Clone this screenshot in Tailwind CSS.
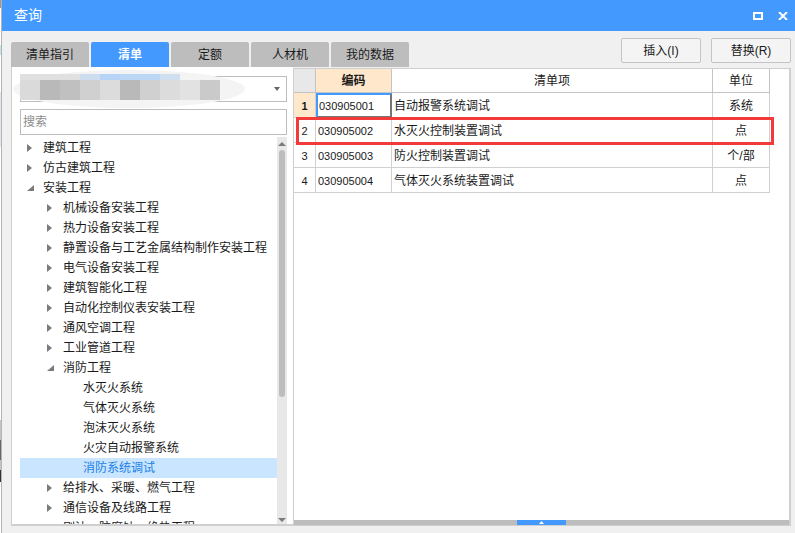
<!DOCTYPE html>
<html>
<head>
<meta charset="utf-8">
<script src="https://cdn.jsdelivr.net/npm/@tailwindcss/browser@4"></script>
</head>
<body class="bg-white overflow-hidden">
<div class="h-[533px] w-[795px] flex text-[12px] text-[#1a1a1a] font-['Liberation_Sans','Noto_Sans_CJK_SC',sans-serif]">
  <!-- sliver of the window behind the dialog -->
  <div class="w-[1px] flex flex-col bg-white">
    <div class="h-[8px] bg-[#999]"></div>
    <div class="h-[37px]"></div>
    <div class="h-[10px] bg-[#bfe6ea]"></div>
    <div class="h-[37px]"></div>
    <div class="h-[55px] bg-[#dfe6f2]"></div>
    <div class="h-[273px]"></div>
    <div class="h-[20px] bg-[#c4c4c4]"></div>
    <div class="h-[20px] bg-[#666]"></div>
    <div class="h-[10px] bg-[#c4c4c4]"></div>
    <div class="h-[12px] bg-[#333]"></div>
  </div>
  <div class="w-[1px] bg-[#b4b4b4]"></div>
  <div class="flex-1 flex flex-col bg-[#f0f0f0] relative">
    <!-- title bar -->
    <div class="h-[31px] bg-[#4499ff] flex items-center pl-[12px] pr-[6px] text-white">
      <span class="text-[14px] flex-1">查询</span>
      <span class="w-[10px] h-[8px] border-2 border-white mr-[15px]"></span>
      <svg class="w-[10px] h-[8px] mr-[1px]" viewBox="0 0 10 8"><path d="M1 0 9 8M9 0 1 8" stroke="#fff" stroke-width="2" fill="none"/></svg>
    </div>

    <div class="flex pl-[9px] pr-[4px]">
      <!-- tabs and tree -->
      <div class="w-[280px] pt-[11px]">
        <div class="flex gap-[2px] w-[400px] h-[25px] text-center leading-[27px]">
          <div class="w-[78px] bg-[#bdbdbd] rounded-t-[2px]">清单指引</div>
          <div class="w-[78px] bg-[#4499ff] rounded-t-[2px] text-white font-bold">清单</div>
          <div class="w-[78px] bg-[#bdbdbd] rounded-t-[2px]">定额</div>
          <div class="w-[78px] bg-[#bdbdbd] rounded-t-[2px]">人材机</div>
          <div class="w-[78px] bg-[#bdbdbd] rounded-t-[2px]">我的数据</div>
        </div>
        <div class="h-[459px] w-[282px] bg-white border border-t-0 border-r-0 border-[#cfcfcf] border-b-2 pl-[8px] pt-[9px] flex flex-col overflow-hidden relative">
          <!-- combo -->
          <div class="h-[26px] w-[267px] shrink-0 border border-[#bdbdbd] flex items-center justify-end pr-[6px]">
            <svg class="w-[6px] h-[4px]" viewBox="0 0 6 4"><path d="M0 0h6L3 4z" fill="#666"/></svg>
          </div>
          <!-- mosaic over the combo -->
          <div class="absolute left-[1px] top-[3px] w-[232px] h-[38px] bg-[#f4f4f4] rounded-[50%]"></div>
          <div class="absolute left-[8px] top-[7px] flex flex-col">
            <div class="flex h-[6px]">
              <div class="w-[60px] bg-[#e0e0e0]"></div><div class="w-[20px] bg-[#cddcee]"></div><div class="w-[20px] bg-[#b7d3f6]"></div><div class="w-[20px] bg-[#bcd6f6]"></div><div class="w-[20px] bg-[#bcd6f6]"></div><div class="w-[20px] bg-[#d0dff0]"></div>
            </div>
            <div class="flex h-[20px]">
              <div class="w-[20px] bg-[#dadada]"></div><div class="w-[20px] bg-[#b9b9b9]"></div><div class="w-[20px] bg-[#c0c0c0]"></div><div class="w-[20px] bg-[#d0d0d0]"></div><div class="w-[20px] bg-[#dcdcdc]"></div><div class="w-[20px] bg-[#b9b9b9]"></div><div class="w-[20px] bg-[#d0d0d0]"></div><div class="w-[20px] bg-[#dcdcdc]"></div><div class="w-[20px] bg-[#e2e2e2]"></div><div class="w-[20px] bg-[#cacaca]"></div>
            </div>
          </div>
          <!-- search -->
          <div class="h-[26px] w-[267px] shrink-0 mt-[7px] border border-[#bdbdbd] flex items-center pl-[2px] text-[#8c8c8c] relative">搜索</div>
          <!-- tree -->
          <div class="flex flex-1 mt-[2px] w-[267px] min-h-0">
            <div class="flex-1 overflow-hidden pt-[1px] leading-[20px]">
              <div class="h-[20px] flex items-center pl-[7px]"><svg class="w-[5px] h-[8px] mr-[11px]" viewBox="0 0 5 8"><path d="M0 0l5 4-5 4z" fill="#7b7b7b"/></svg>建筑工程</div>
              <div class="h-[20px] flex items-center pl-[7px]"><svg class="w-[5px] h-[8px] mr-[11px]" viewBox="0 0 5 8"><path d="M0 0l5 4-5 4z" fill="#7b7b7b"/></svg>仿古建筑工程</div>
              <div class="h-[20px] flex items-center pl-[7px]"><svg class="w-[7px] h-[6px] mr-[9px]" viewBox="0 0 7 6"><path d="M7 0v6H0z" fill="#7b7b7b"/></svg>安装工程</div>
              <div class="h-[20px] flex items-center pl-[27px]"><svg class="w-[5px] h-[8px] mr-[11px]" viewBox="0 0 5 8"><path d="M0 0l5 4-5 4z" fill="#7b7b7b"/></svg>机械设备安装工程</div>
              <div class="h-[20px] flex items-center pl-[27px]"><svg class="w-[5px] h-[8px] mr-[11px]" viewBox="0 0 5 8"><path d="M0 0l5 4-5 4z" fill="#7b7b7b"/></svg>热力设备安装工程</div>
              <div class="h-[20px] flex items-center pl-[27px]"><svg class="w-[5px] h-[8px] mr-[11px]" viewBox="0 0 5 8"><path d="M0 0l5 4-5 4z" fill="#7b7b7b"/></svg>静置设备与工艺金属结构制作安装工程</div>
              <div class="h-[20px] flex items-center pl-[27px]"><svg class="w-[5px] h-[8px] mr-[11px]" viewBox="0 0 5 8"><path d="M0 0l5 4-5 4z" fill="#7b7b7b"/></svg>电气设备安装工程</div>
              <div class="h-[20px] flex items-center pl-[27px]"><svg class="w-[5px] h-[8px] mr-[11px]" viewBox="0 0 5 8"><path d="M0 0l5 4-5 4z" fill="#7b7b7b"/></svg>建筑智能化工程</div>
              <div class="h-[20px] flex items-center pl-[27px]"><svg class="w-[5px] h-[8px] mr-[11px]" viewBox="0 0 5 8"><path d="M0 0l5 4-5 4z" fill="#7b7b7b"/></svg>自动化控制仪表安装工程</div>
              <div class="h-[20px] flex items-center pl-[27px]"><svg class="w-[5px] h-[8px] mr-[11px]" viewBox="0 0 5 8"><path d="M0 0l5 4-5 4z" fill="#7b7b7b"/></svg>通风空调工程</div>
              <div class="h-[20px] flex items-center pl-[27px]"><svg class="w-[5px] h-[8px] mr-[11px]" viewBox="0 0 5 8"><path d="M0 0l5 4-5 4z" fill="#7b7b7b"/></svg>工业管道工程</div>
              <div class="h-[20px] flex items-center pl-[27px]"><svg class="w-[7px] h-[6px] mr-[9px]" viewBox="0 0 7 6"><path d="M7 0v6H0z" fill="#7b7b7b"/></svg>消防工程</div>
              <div class="h-[20px] pl-[63px]">水灭火系统</div>
              <div class="h-[20px] pl-[63px]">气体灭火系统</div>
              <div class="h-[20px] pl-[63px]">泡沫灭火系统</div>
              <div class="h-[20px] pl-[63px]">火灾自动报警系统</div>
              <div class="h-[20px] pl-[63px] bg-[#c9e5ff] text-[#1a7fe8]">消防系统调试</div>
              <div class="h-[20px] flex items-center pl-[27px]"><svg class="w-[5px] h-[8px] mr-[11px]" viewBox="0 0 5 8"><path d="M0 0l5 4-5 4z" fill="#7b7b7b"/></svg>给排水、采暖、燃气工程</div>
              <div class="h-[20px] flex items-center pl-[27px]"><svg class="w-[5px] h-[8px] mr-[11px]" viewBox="0 0 5 8"><path d="M0 0l5 4-5 4z" fill="#7b7b7b"/></svg>通信设备及线路工程</div>
              <div class="h-[20px] flex items-center pl-[27px]"><svg class="w-[5px] h-[8px] mr-[11px]" viewBox="0 0 5 8"><path d="M0 0l5 4-5 4z" fill="#7b7b7b"/></svg>刷油、防腐蚀、绝热工程</div>
            </div>
            <!-- scrollbar -->
            <div class="w-[10px] bg-[#e8e8e8] flex flex-col items-center">
              <svg class="w-[8px] h-[4px] mt-[5px] shrink-0" viewBox="0 0 8 4"><path d="M4 0l4 4H0z" fill="#7b7b7b"/></svg>
              <div class="w-[6px] h-[247px] mt-[4px] bg-[#bdbdbd] rounded-[3px]"></div>
              <svg class="w-[8px] h-[4px] mt-auto mb-[2px] shrink-0" viewBox="0 0 8 4"><path d="M0 0h8L4 4z" fill="#7b7b7b"/></svg>
            </div>
          </div>
        </div>
      </div>

      <!-- right side -->
      <div class="flex-1 ml-[2px] flex flex-col">
        <div class="h-[37px] flex justify-end items-start pt-[7px] gap-[10px]">
          <div class="w-[80px] h-[25px] bg-[#f4f4f4] border border-[#c4c4c4] rounded-[2px] flex items-center justify-center">插入(I)</div>
          <div class="w-[80px] h-[25px] bg-[#f4f4f4] border border-[#c4c4c4] rounded-[2px] flex items-center justify-center">替换(R)</div>
        </div>
        <div class="h-[458px] bg-white border border-[#cfcfcf] border-r-2 flex flex-col relative">
          <div class="flex-1">
            <div class="grid grid-cols-[22px_76px_321px_57px] w-[476px] grid-rows-[24px_25px_25px_25px_25px] leading-[26px]">
              <div class="bg-[#e8e8e8] border-r border-b border-[#c4c4c4]"></div>
              <div class="bg-[#ffe7cb] border-r border-b border-[#c4c4c4] text-center font-bold leading-[24px]">编码</div>
              <div class="border-r border-b border-[#c4c4c4] text-center leading-[24px]">清单项</div>
              <div class="border-r border-b border-[#c4c4c4] text-center leading-[24px]">单位</div>

              <div class="bg-[#ffe7cb] border-r border-b border-[#d0d0d0] text-center font-bold text-[11px]">1</div>
              <div class="border-2 border-[#777] border-t-[#4499ff] border-l-[#4499ff] pl-[1px] leading-[22px] text-[11px]">030905001</div>
              <div class="border-r border-b border-[#d0d0d0] pl-[2px]">自动报警系统调试</div>
              <div class="border-r border-b border-[#d0d0d0] text-center">系统</div>

              <div class="border-r border-b border-[#d0d0d0] text-center text-[11px]">2</div>
              <div class="border-r border-b border-[#d0d0d0] pl-[2px] text-[11px]">030905002</div>
              <div class="border-r border-b border-[#d0d0d0] pl-[2px]">水灭火控制装置调试</div>
              <div class="border-r border-b border-[#d0d0d0] text-center">点</div>

              <div class="border-r border-b border-[#d0d0d0] text-center text-[11px]">3</div>
              <div class="border-r border-b border-[#d0d0d0] pl-[2px] text-[11px]">030905003</div>
              <div class="border-r border-b border-[#d0d0d0] pl-[2px]">防火控制装置调试</div>
              <div class="border-r border-b border-[#d0d0d0] text-center">个/部</div>

              <div class="border-r border-b border-[#d0d0d0] text-center text-[11px]">4</div>
              <div class="border-r border-b border-[#d0d0d0] pl-[2px] text-[11px]">030905004</div>
              <div class="border-r border-b border-[#d0d0d0] pl-[2px]">气体灭火系统装置调试</div>
              <div class="border-r border-b border-[#d0d0d0] text-center">点</div>
            </div>
          </div>
          <!-- red highlight drawn over row 2 -->
          <div class="absolute left-[2px] top-[48px] w-[478px] h-[28px] border-[3px] border-[#f33a3a]"></div>
          <div class="h-[5px] bg-[#bdbdbd] flex pl-[223px]">
            <div class="w-[49px] bg-[#4499ff] flex items-center justify-center">
              <svg class="w-[5px] h-[3px]" viewBox="0 0 5 3"><path d="M2.5 0L5 3H0z" fill="#fff"/></svg>
            </div>
          </div>
        </div>
      </div>
    </div>
  </div>
</div>
</body>
</html>
